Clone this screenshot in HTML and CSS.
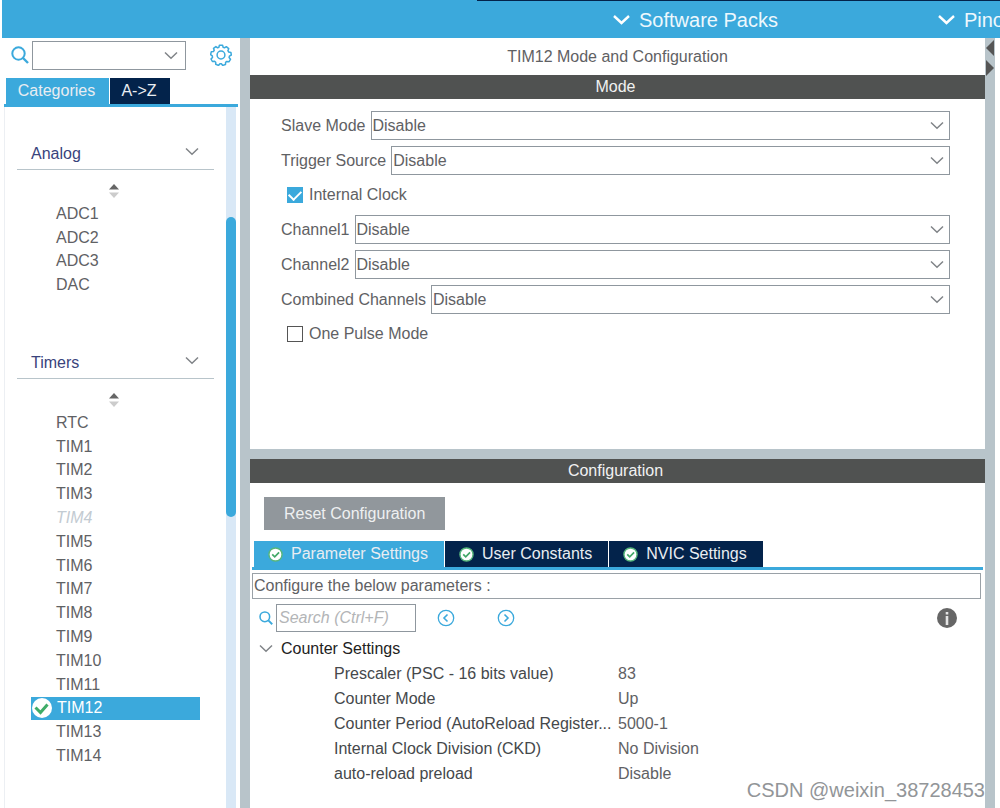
FILE: index.html
```html
<!DOCTYPE html>
<html lang="en">
<head>
<meta charset="utf-8">
<title>TIM12 Mode and Configuration</title>
<link rel="stylesheet" href="styles.css">
</head>
<body>
<svg class="defs" aria-hidden="true">
  <symbol id="chevron" viewBox="0 0 14 9"><path d="M1 1.5 7 7.2 13 1.5" fill="none" stroke="currentColor" stroke-width="1.5"/></symbol>
  <symbol id="search" viewBox="0 0 18 18"><circle cx="7.5" cy="7.5" r="6.2" fill="none" stroke="currentColor" stroke-width="2"/><path d="m12 12 5 5" stroke="currentColor" stroke-width="2.4"/></symbol>
  <symbol id="sort" viewBox="0 0 10 14"><path d="M0 5.5 5 0l5 5.5z" fill="#666"/><path d="M0 8.5 5 14l5-5.5z" fill="#ccc"/></symbol>
  <symbol id="ok" viewBox="0 0 16 16"><circle cx="8" cy="8" r="7" fill="#fff" stroke="#57b67c" stroke-width="1.5"/><path d="M4.5 7.8 7.2 10.5 11.8 5.8" fill="none" stroke="#43a868" stroke-width="1.8"/></symbol>
</svg>

<nav class="topbar">
  <button class="topbar-item" type="button"><svg class="topbar-icon"><path d="m1 2 7.5 7L16 2" fill="none" stroke="#fff" stroke-width="2.4"/></svg>Software Packs</button>
  <button class="topbar-item" type="button"><svg class="topbar-icon"><path d="m1 2 7.5 7L16 2" fill="none" stroke="#fff" stroke-width="2.4"/></svg>Pinout</button>
</nav>

<div class="workspace">
  <aside class="sidebar">
    <div class="finder">
      <svg class="icon-search"><use href="#search"/></svg>
      <span class="combo finder-combo"><select aria-label="Search peripherals"><option></option></select><svg class="chevron"><use href="#chevron"/></svg></span>
      <button class="gear" type="button" aria-label="Settings">
        <svg viewBox="0 0 22 22" width="22" height="22" fill="none" stroke="#3ba9dc" stroke-width="1.5" stroke-linejoin="round"><path d="m9.4 1.2 3.2 0 .5 2.1 1.4.5 1.8-1.1 2.4 2-.8 2 .8 1.3 2.2.4.4 2.6-1.9 1.1-.3 1.5 1.4 1.7-1.6 2.5-2.1-.4-1.2 1-.1 2.1-2.9.9-1.2-1.7-1.5 0-1.4 1.7-2.8-1.1 0-2.1-1.1-1-2.2.3-1.4-2.5 1.5-1.6-.2-1.5L.6 10.6l.7-2.8 2.1-.3.8-1.2-.7-2L5.900 2.600l1.700 1.200 1.300-.5z"/><circle cx="11" cy="11" r="3.900"/></svg>
      </button>
    </div>
    <div class="tabs side-tabs" role="tablist">
      <button class="tab active" type="button" role="tab" aria-selected="true">Categories</button>
      <button class="tab" type="button" role="tab" aria-selected="false">A-&gt;Z</button>
    </div>
    <div class="tree">
      <div class="tree-body">
        <section class="group">
          <button class="group-head" type="button">Analog<svg class="chevron"><use href="#chevron"/></svg></button>
          <svg class="sort"><use href="#sort"/></svg>
          <ul class="list list-analog">
            <li>ADC1</li><li>ADC2</li><li>ADC3</li><li>DAC</li>
          </ul>
        </section>
        <section class="group">
          <button class="group-head" type="button">Timers<svg class="chevron"><use href="#chevron"/></svg></button>
          <svg class="sort"><use href="#sort"/></svg>
          <ul class="list list-timers">
            <li>RTC</li><li>TIM1</li><li>TIM2</li><li>TIM3</li><li class="unavailable">TIM4</li><li>TIM5</li><li>TIM6</li><li>TIM7</li><li>TIM8</li><li>TIM9</li><li>TIM10</li><li>TIM11</li>
            <li class="selected"><svg viewBox="0 0 20 20" width="20" height="20"><circle cx="10" cy="10" r="10" fill="#fff"/><path d="m3.500 9.500 5 5 7-8" fill="none" stroke="#3fac68" stroke-width="3"/></svg>TIM12</li>
            <li>TIM13</li><li>TIM14</li>
          </ul>
        </section>
      </div>
      <div class="scrollbar"><div class="thumb"></div></div>
    </div>
  </aside>

  <main class="content">
    <section class="panel mode">
      <h1 class="title">TIM12 Mode and Configuration</h1>
      <h2 class="bar">Mode</h2>
      <form class="form">
        <div class="field"><label for="slave">Slave Mode</label><span class="combo"><select id="slave"><option>Disable</option></select><svg class="chevron"><use href="#chevron"/></svg></span></div>
        <div class="field"><label for="trigger">Trigger Source</label><span class="combo"><select id="trigger"><option>Disable</option></select><svg class="chevron"><use href="#chevron"/></svg></span></div>
        <label class="check"><input type="checkbox" checked>Internal Clock</label>
        <div class="field"><label for="ch1">Channel1</label><span class="combo"><select id="ch1"><option>Disable</option></select><svg class="chevron"><use href="#chevron"/></svg></span></div>
        <div class="field"><label for="ch2">Channel2</label><span class="combo"><select id="ch2"><option>Disable</option></select><svg class="chevron"><use href="#chevron"/></svg></span></div>
        <div class="field"><label for="combined">Combined Channels</label><span class="combo"><select id="combined"><option>Disable</option></select><svg class="chevron"><use href="#chevron"/></svg></span></div>
        <label class="check"><input type="checkbox">One Pulse Mode</label>
      </form>
    </section>

    <section class="panel config">
      <h2 class="bar">Configuration</h2>
      <button class="reset" type="button">Reset Configuration</button>
      <div class="tabs config-tabs" role="tablist">
        <button class="tab active" type="button" role="tab" aria-selected="true"><svg class="ok"><use href="#ok"/></svg>Parameter Settings</button>
        <button class="tab" type="button" role="tab" aria-selected="false"><svg class="ok"><use href="#ok"/></svg>User Constants</button>
        <button class="tab" type="button" role="tab" aria-selected="false"><svg class="ok"><use href="#ok"/></svg>NVIC Settings</button>
      </div>
      <div class="parameters">
        <p class="hint">Configure the below parameters :</p>
        <div class="toolbar">
          <svg class="icon-search small"><use href="#search"/></svg>
          <input class="search" type="text" placeholder="Search (Ctrl+F)" aria-label="Search parameters">
          <button class="step" type="button" aria-label="Previous"><svg viewBox="0 0 18 18" width="18" height="18" fill="none" stroke="#3ba9dc"><circle cx="9" cy="9" r="7.700" stroke-width="1.300"/><path d="M10.500 5.500 7 9l3.500 3.500" stroke-width="1.600"/></svg></button>
          <button class="step" type="button" aria-label="Next"><svg viewBox="0 0 18 18" width="18" height="18" fill="none" stroke="#3ba9dc"><circle cx="9" cy="9" r="7.700" stroke-width="1.300"/><path d="M7.500 5.500 11 9l-3.500 3.500" stroke-width="1.600"/></svg></button>
          <button class="info" type="button" aria-label="Information"><svg viewBox="0 0 20 20" width="20" height="20"><circle cx="10" cy="10" r="10" fill="#666"/><path d="M8.700 4h2.600v2.500H8.700zM8.700 8h2.600v9H8.700z" fill="#e4e4e4"/></svg></button>
        </div>
        <button class="settings-head" type="button"><svg class="chevron"><use href="#chevron"/></svg>Counter Settings</button>
        <table class="settings">
          <tbody>
            <tr><th scope="row">Prescaler (PSC - 16 bits value)</th><td>83</td></tr>
            <tr><th scope="row">Counter Mode</th><td>Up</td></tr>
            <tr><th scope="row">Counter Period (AutoReload Register...</th><td>5000-1</td></tr>
            <tr><th scope="row">Internal Clock Division (CKD)</th><td>No Division</td></tr>
            <tr><th scope="row">auto-reload preload</th><td>Disable</td></tr>
          </tbody>
        </table>
      </div>
    </section>
  </main>

  <div class="splitter">
    <svg viewBox="0 0 10 40" width="10" height="40"><path d="M9 2v16L1 10zM1 22v16l8-8z" fill="#555"/></svg>
  </div>
</div>
<div class="watermark">CSDN @weixin_38728453</div>
</body>
</html>
```
FILE: styles.css
```css
* { box-sizing: border-box; }

body {
  margin: 0;
  min-height: 100vh;
  display: flex;
  flex-direction: column;
  overflow: hidden;
  background: #fff;
  color: #5f6164;
  font: 16px/24px "Liberation Sans", Arial, sans-serif;
}

button, select, input { font: inherit; color: inherit; }
button { border: 0; padding: 0; background: none; }
h1, h2, p, ul { margin: 0; padding: 0; font-size: 16px; font-weight: normal; }
svg { flex: none; }
.defs { position: absolute; width: 0; height: 0; }

.topbar {
  display: flex;
  gap: 160px;
  height: 38px;
  margin-left: 2px;
  padding-left: 611px;
  overflow: hidden;
  background: linear-gradient(#03234b, #03234b) 475px 0 / 100% 1px no-repeat #3ba9dc;
}
.topbar-item {
  display: flex;
  align-items: center;
  gap: 9px;
  padding-top: 2px;
  color: #eef8fd;
  font-size: 20px;
  white-space: nowrap;
}
.topbar-icon { width: 17px; height: 12px; }

.workspace { flex: 1; display: flex; }

.sidebar {
  width: 240px;
  flex: none;
  display: flex;
  flex-direction: column;
  padding-left: 4px;
}
.finder {
  display: flex;
  align-items: center;
  height: 34px;
  padding-left: 7px;
}
.icon-search { width: 18px; height: 18px; color: #3ba9dc; }
.icon-search.small { width: 14px; height: 14px; }
.gear { display: flex; margin-left: 24px; }

.combo { flex: 1; display: grid; align-items: center; }
.combo > * { grid-area: 1 / 1; }
.combo select {
  appearance: none;
  width: 100%;
  height: 29px;
  padding: 1px 30px 0 1px;
  border: 1px solid #8f979e;
  border-radius: 0;
  background: #fff;
}
.chevron { width: 14px; height: 9px; color: #808488; pointer-events: none; }
.combo .chevron { justify-self: end; margin-right: 6px; }
.finder-combo { flex: none; width: 154px; margin-left: 3px; }
.finder-combo .chevron { margin-right: 8px; }

.tabs { display: flex; gap: 1px; border-bottom: 3px solid #3ba9dc; }
.tab {
  display: flex;
  align-items: center;
  justify-content: center;
  height: 26px;
  background: #03234b;
  color: #e9edf2;
}
.tab.active { background: #3ba9dc; }
.side-tabs { margin: 6px 2px 0 0; padding-left: 2px; }
.side-tabs .tab { width: 60px; padding-right: 2px; }
.side-tabs .tab.active { width: 103px; }

.tree { flex: 1; display: flex; margin-right: 4px; border-left: 1px solid #eceff3; }
.tree-body { flex: 1; padding: 32px 12px 0; }
.group { display: flex; flex-direction: column; min-height: 209px; }
.group-head {
  flex: none;
  display: flex;
  align-items: center;
  justify-content: space-between;
  height: 31px;
  padding: 0 15px 0 14px;
  border-bottom: 1px solid #b8c4ca;
  color: #39437c;
}
.group-head .chevron { margin-bottom: 5px; }
.sort { width: 10px; height: 14px; align-self: center; margin: 14px 4px 4px 0; }
.list { flex: none; display: grid; grid-auto-rows: 1fr; padding: 0 14px; line-height: 20px; list-style: none; }
.list-analog { height: 95px; }
.list-timers { height: 357px; }
.list li { display: flex; align-items: center; padding-left: 25px; }
.list .unavailable { color: #c3cbd2; font-style: italic; }
.list .selected { gap: 5px; padding-left: 1px; background: #3ba9dc; color: #fff; }

.scrollbar { width: 10px; padding-top: 110px; background: #d9e8f6; }
.thumb { height: 300px; border-radius: 5px; background: #3ba9dc; }

.content { flex: 1; min-width: 0; display: flex; flex-direction: column; border-left: 10px solid #b8c4ca; }
.title { height: 37px; line-height: 37px; text-align: center; }
.bar { height: 24px; padding-right: 4px; background: #505251; color: #f1f1f1; text-align: center; }
.mode { height: 411px; }
.form { display: flex; flex-direction: column; gap: 6px; padding: 12px 35px 0 31px; }
.field { display: flex; align-items: center; gap: 5px; }
.check { display: flex; align-items: center; gap: 6px; height: 28px; padding-left: 6px; }
.check input {
  appearance: none;
  display: grid;
  place-items: center;
  width: 16px;
  height: 16px;
  margin: 0;
  border: 1px solid #555;
  background: #fff;
}
.check input:checked { border-color: #3ba9dc; background: #3ba9dc; }
.check input:checked::before {
  content: "";
  width: 10px;
  height: 6px;
  margin-bottom: 3px;
  border: solid #fff;
  border-width: 0 0 2px 2px;
  transform: rotate(-45deg);
}

.config { flex: 1; border-top: 10px solid #b8c4ca; }
.reset {
  display: block;
  height: 33px;
  margin: 14px 0 11px 14px;
  padding: 0 20px;
  background: #91979c;
  color: #eef0f1;
}
.config-tabs { margin: 0 2px; padding-left: 2px; }
.config-tabs .tab { gap: 8px; padding: 0 16px 0 14px; }
.ok { width: 15px; height: 15px; }
.parameters { padding: 3px 4px 0 2px; }
.hint { height: 26px; padding-left: 1px; border: 1px solid #9aa1a7; }
.toolbar { display: flex; align-items: center; height: 37px; padding-left: 7px; }
.search {
  width: 140px;
  height: 28px;
  margin: 0 21px 0 3px;
  padding: 0 2px;
  border: 1px solid #8f979e;
  border-radius: 0;
}
.search::placeholder { color: #b3b5b7; font-style: italic; opacity: 1; }
.step { display: flex; margin-right: 42px; }
.info { display: flex; margin: 0 24px 0 auto; }
.settings-head { display: flex; align-items: center; gap: 8px; height: 25px; padding-left: 7px; color: #222; }
.settings { width: 100%; padding-left: 82px; border-spacing: 0; table-layout: fixed; }
.settings th, .settings td { height: 25px; padding: 0; text-align: left; font-weight: normal; white-space: nowrap; }
.settings th { width: 284px; color: #45484b; }

.splitter { flex: none; display: flex; flex-direction: column; width: 10px; margin-right: 5px; background: #b8c4ca; }

.watermark {
  position: absolute;
  right: 15px;
  bottom: 6px;
  color: #929598;
  font-size: 20px;
  line-height: 24px;
}
```
